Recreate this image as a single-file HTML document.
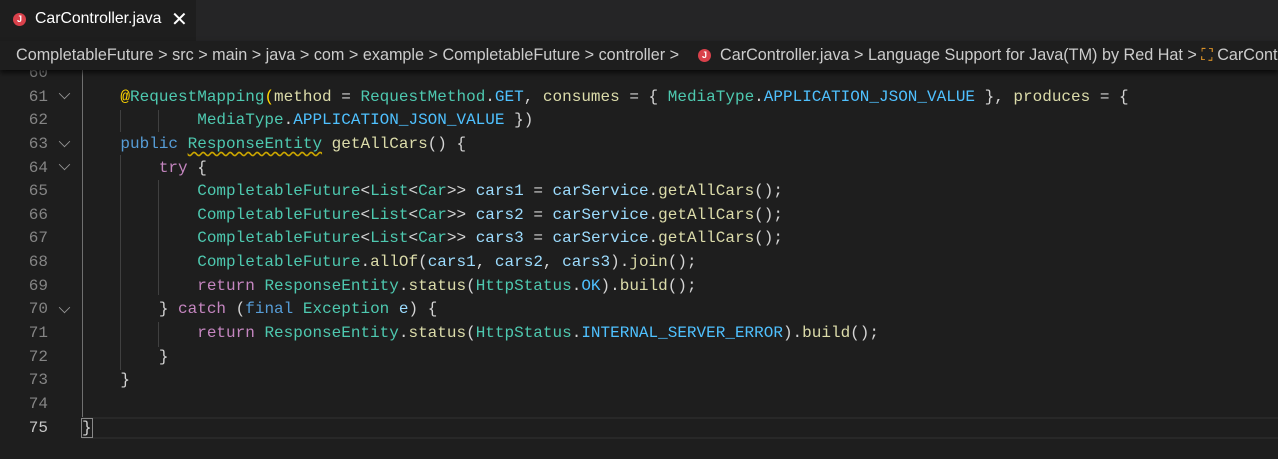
<!DOCTYPE html>
<html><head><meta charset="utf-8"><style>
body{margin:0;width:1278px;height:459px;background:#1e1e1e;overflow:hidden;font-family:"Liberation Sans",sans-serif}
.tabs{position:absolute;left:0;top:0;width:1278px;height:41px;background:#252526}
.tab{position:absolute;left:0;top:0;width:196px;height:41px;background:#1e1e1e;color:#fff;font-size:15.8px}
.ji{position:absolute;width:13px;height:13px;border-radius:50%;background:#d9414b;color:#fff;font-size:9px;font-weight:bold;text-align:center;line-height:13px}
.bc{position:absolute;left:0;top:41px;width:1278px;height:29px;background:#1e1e1e;color:#cccccc;font-size:16.2px;white-space:nowrap;box-shadow:0 3px 5px #000a;z-index:2}
.gut{position:absolute;left:0;width:48px;text-align:right;color:#858585;font-family:"Liberation Mono",monospace;font-size:16px}
.code{position:absolute;left:82px;font-family:"Liberation Mono",monospace;font-size:16px;color:#d4d4d4}
.l{height:23.65px;line-height:23.65px;white-space:pre}
.k{color:#569cd6}.c{color:#c586c0}.t{color:#4ec9b0}.f{color:#dcdcaa}.v{color:#9cdcfe}.n{color:#4fc1ff}.y{color:#ffd700}
.chev{position:absolute;left:60px;width:8px;height:8px;border-right:1.5px solid #c5c5c5;border-bottom:1.5px solid #c5c5c5;transform:rotate(45deg) scale(0.9);opacity:.7}
.sq{text-decoration:underline wavy #cca700;text-underline-offset:3px}
.guide{position:absolute;width:1px;background:#404040}
</style></head><body>
<div class="tabs"><div class="tab"><div class="ji" style="left:13px;top:13px">J</div><span style="position:absolute;left:35px;top:10px">CarController.java</span><span style="position:absolute;left:171px;top:7px;font-size:20px">✕</span></div></div>
<div class="bc"><span style="position:absolute;left:16px;top:5px">CompletableFuture &gt; src &gt; main &gt; java &gt; com &gt; example &gt; CompletableFuture &gt; controller &gt; </span><div class="ji" style="left:698px;top:8px">J</div><span style="position:absolute;left:720px;top:5px">CarController.java &gt; Language Support for Java(TM) by Red Hat &gt; <span style="color:#ee9d28">⛶</span> CarController</span></div>
<div class="gut" style="top:62px;">
<div class="l">60</div><div class="l">61</div><div class="l">62</div><div class="l">63</div><div class="l">64</div><div class="l">65</div><div class="l">66</div><div class="l">67</div><div class="l">68</div><div class="l">69</div><div class="l">70</div><div class="l">71</div><div class="l">72</div><div class="l">73</div><div class="l">74</div><div class="l" style="color:#c6c6c6">75</div></div>
<div class="chev" style="top:89px"></div><div class="chev" style="top:137px"></div><div class="chev" style="top:160px"></div><div class="chev" style="top:303px"></div>
<div class="guide" style="left:82px;top:70px;height:347px;background:#707070"></div>
<div class="guide" style="left:120px;top:110px;height:22px"></div>
<div class="guide" style="left:158px;top:110px;height:22px"></div>
<div class="guide" style="left:120px;top:155px;height:215px"></div>
<div class="guide" style="left:158px;top:180px;height:115px"></div>
<div class="guide" style="left:158px;top:322px;height:25px"></div>
<div style="position:absolute;left:82px;top:417px;width:1196px;height:22px;border-top:2px solid #282828;border-bottom:2px solid #282828;box-sizing:border-box"></div>
<div class="code" style="top:62px"><div class="l"> </div><div class="l">    <span class="y">@</span><span class="t">RequestMapping</span><span class="y">(</span><span class="f">method</span> = <span class="t">RequestMethod</span>.<span class="n">GET</span>, <span class="f">consumes</span> = { <span class="t">MediaType</span>.<span class="n">APPLICATION_JSON_VALUE</span> }, <span class="f">produces</span> = {</div><div class="l">            <span class="t">MediaType</span>.<span class="n">APPLICATION_JSON_VALUE</span> })</div><div class="l">    <span class="k">public</span> <span class="t sq">ResponseEntity</span> <span class="f">getAllCars</span>() {</div><div class="l">        <span class="c">try</span> {</div><div class="l">            <span class="t">CompletableFuture</span>&lt;<span class="t">List</span>&lt;<span class="t">Car</span>&gt;&gt; <span class="v">cars1</span> = <span class="v">carService</span>.<span class="f">getAllCars</span>();</div><div class="l">            <span class="t">CompletableFuture</span>&lt;<span class="t">List</span>&lt;<span class="t">Car</span>&gt;&gt; <span class="v">cars2</span> = <span class="v">carService</span>.<span class="f">getAllCars</span>();</div><div class="l">            <span class="t">CompletableFuture</span>&lt;<span class="t">List</span>&lt;<span class="t">Car</span>&gt;&gt; <span class="v">cars3</span> = <span class="v">carService</span>.<span class="f">getAllCars</span>();</div><div class="l">            <span class="t">CompletableFuture</span>.<span class="f">allOf</span>(<span class="v">cars1</span>, <span class="v">cars2</span>, <span class="v">cars3</span>).<span class="f">join</span>();</div><div class="l">            <span class="c">return</span> <span class="t">ResponseEntity</span>.<span class="f">status</span>(<span class="t">HttpStatus</span>.<span class="n">OK</span>).<span class="f">build</span>();</div><div class="l">        } <span class="c">catch</span> (<span class="k">final</span> <span class="t">Exception</span> <span class="v">e</span>) {</div><div class="l">            <span class="c">return</span> <span class="t">ResponseEntity</span>.<span class="f">status</span>(<span class="t">HttpStatus</span>.<span class="n">INTERNAL_SERVER_ERROR</span>).<span class="f">build</span>();</div><div class="l">        }</div><div class="l">    }</div><div class="l"> </div><div class="l"><span style="outline:1px solid #888">}</span></div></div>
</body></html>
